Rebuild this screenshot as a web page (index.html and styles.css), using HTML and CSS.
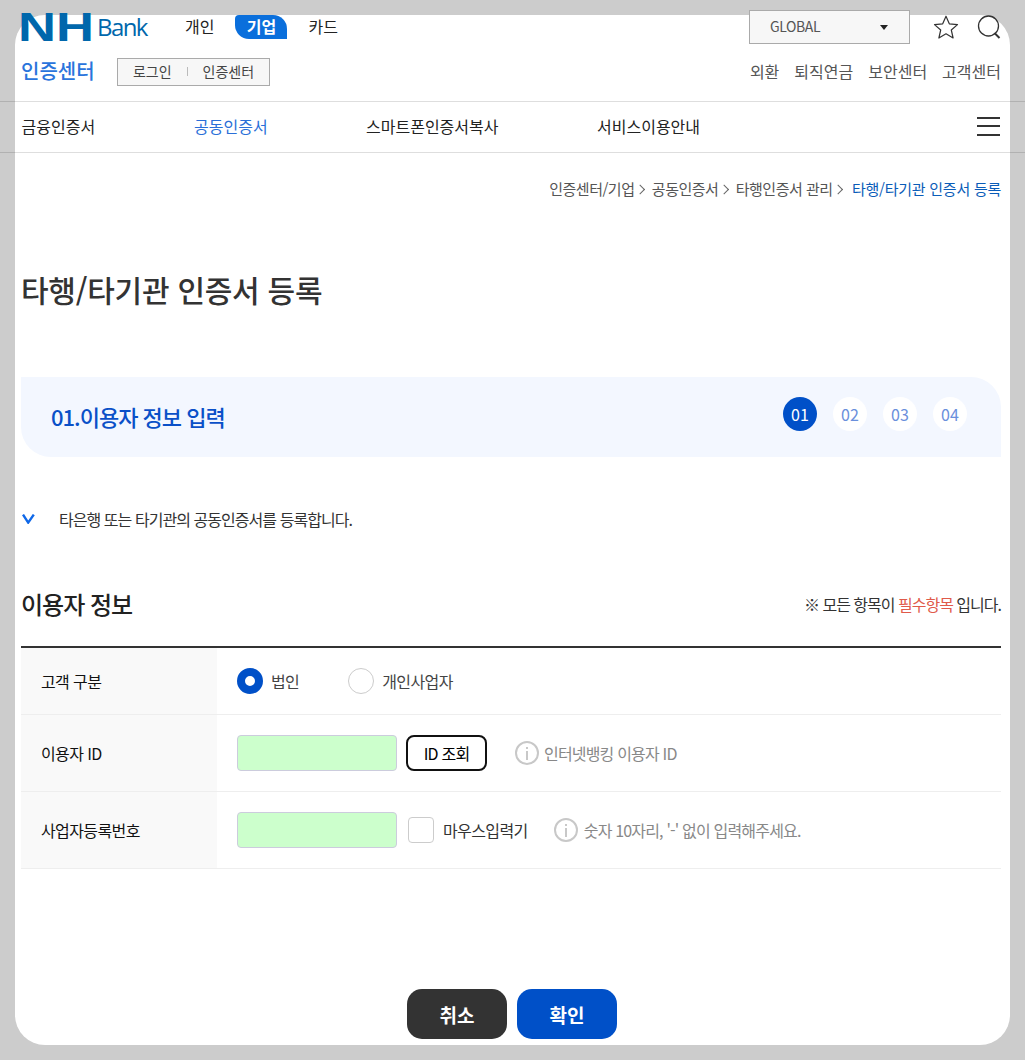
FILE: index.html
```html
<!DOCTYPE html>
<html lang="ko">
<head>
<meta charset="utf-8">
<title>타행/타기관 인증서 등록</title>
<link rel="stylesheet" href="styles.css">
</head>
<body>
<div class="card">
  <header class="top">
    <div class="logo">
      <svg class="logo-nh" width="71" height="30" viewBox="0 0 71 30"><text x="-3" y="29" textLength="76" lengthAdjust="spacingAndGlyphs" class="logo-text">NH</text></svg>
      <span class="logo-bank">Bank</span>
    </div>
    <nav class="tabs">
      <a class="tab">개인</a>
      <a class="tab tab-on">기업</a>
      <a class="tab">카드</a>
    </nav>
    <div class="global">GLOBAL<span class="caret"></span></div>
    <svg class="ico-star" width="26" height="24" viewBox="0 0 26 24"><path d="M13 1.2l3.3 7.6 8.2.8-6.2 5.4 1.8 8-7.1-4.2-7.1 4.2 1.8-8L1.5 9.6l8.2-.8z" fill="none" stroke="#333" stroke-width="1.2" stroke-linejoin="round"/></svg>
    <svg class="ico-search" width="24" height="24" viewBox="0 0 24 24"><circle cx="11.5" cy="11" r="10" fill="none" stroke="#333" stroke-width="1.3"/><path d="M17.5 18l5 5" stroke="#333" stroke-width="2"/></svg>
  </header>
  <div class="sub">
    <strong class="sub-title">인증센터</strong>
    <div class="sub-box"><span>로그인</span><i class="sep"></i><span>인증센터</span></div>
    <div class="sub-links"><a>외환</a><a>퇴직연금</a><a>보안센터</a><a>고객센터</a></div>
  </div>
  <nav class="gnb">
    <a class="gnb-a">금융인증서</a>
    <a class="gnb-b gnb-on">공동인증서</a>
    <a class="gnb-c">스마트폰인증서복사</a>
    <a class="gnb-d">서비스이용안내</a>
    <span class="burger"><i></i><i></i><i></i></span>
  </nav>
  <main class="main">
    <div class="crumb">인증센터/기업 <b class="gt"></b> 공동인증서 <b class="gt"></b> 타행인증서 관리 <b class="gt"></b> <em>타행/타기관 인증서 등록</em></div>
    <h1 class="title">타행/타기관 인증서 등록</h1>
    <section class="step">
      <h2 class="step-title">01.이용자 정보 입력</h2>
      <ol class="dots"><li class="dot dot-on">01</li><li class="dot">02</li><li class="dot">03</li><li class="dot">04</li></ol>
    </section>
    <p class="note"><svg class="check" width="13" height="10" viewBox="0 0 13 10"><path d="M1 .6l5.2 8L11.8.6" fill="none" stroke="#0f68e8" stroke-width="2.4"/></svg>타은행 또는 타기관의 공동인증서를 등록합니다.</p>
    <div class="sec-head">
      <h3 class="sec-title">이용자 정보</h3>
      <span class="req">※ 모든 항목이 <em>필수항목</em> 입니다.</span>
    </div>
    <div class="form">
      <div class="row row-a">
        <div class="th">고객 구분</div>
        <div class="td">
          <span class="radio radio-on"></span><span class="r-label">법인</span>
          <span class="radio"></span><span class="r-label">개인사업자</span>
        </div>
      </div>
      <div class="row">
        <div class="th">이용자 ID</div>
        <div class="td">
          <span class="inp"></span>
          <span class="btn-id">ID 조회</span>
          <svg class="info info-1" width="24" height="24" viewBox="0 0 24 24"><circle cx="12" cy="12" r="11" fill="none" stroke="#c8c8c8" stroke-width="2"/><rect x="11" y="10" width="2" height="9" fill="#c8c8c8"/><rect x="11" y="6" width="2" height="2" fill="#c8c8c8"/></svg>
          <span class="hint">인터넷뱅킹 이용자 ID</span>
        </div>
      </div>
      <div class="row">
        <div class="th">사업자등록번호</div>
        <div class="td">
          <span class="inp"></span>
          <span class="chk"></span>
          <span class="chk-label">마우스입력기</span>
          <svg class="info info-2" width="24" height="24" viewBox="0 0 24 24"><circle cx="12" cy="12" r="11" fill="none" stroke="#c8c8c8" stroke-width="2"/><rect x="11" y="10" width="2" height="9" fill="#c8c8c8"/><rect x="11" y="6" width="2" height="2" fill="#c8c8c8"/></svg>
          <span class="hint">숫자 10자리, '-' 없이 입력해주세요.</span>
        </div>
      </div>
    </div>
    <div class="actions"><button class="act act-cancel">취소</button><button class="act act-ok">확인</button></div>
  </main>
</div>
</body>
</html>
```
FILE: styles.css
```css
* { box-sizing: border-box; }
html, body { margin: 0; height: 1060px; overflow: hidden; }
body { background: #ccc; padding: 15px; font-family: "Noto Sans CJK KR", "Noto Sans", sans-serif; color: #222; }
a { color: inherit; text-decoration: none; }
em { font-style: normal; }
h1, h2, h3, p, ol { margin: 0; padding: 0; }
ol { list-style: none; }

.card { display: flow-root; width: 995px; height: 1030px; background: #fff; border-radius: 30px; padding: 0 9px 0 6px; }

.top { display: flex; align-items: center; height: 34px; margin-top: -5px; }
.logo { display: flex; align-items: center; width: 164px; height: 30px; gap: 5px; }
.logo-nh { display: block; flex: none; overflow: visible; }
.logo-text { font-family: "Liberation Sans", sans-serif; font-weight: 700; font-size: 40px; fill: #0067ac; }
.logo-bank { font-family: "Open Sans", sans-serif; font-size: 24px; line-height: 30px; color: #0067ac; letter-spacing: -1.6px; }
.tabs { display: flex; align-items: center; gap: 21px; font-size: 16px; color: #222; }
.tab { display: block; line-height: 22px; padding-bottom: 2px; }
.tab-on { width: 52px; height: 24px; background: #0a6fdc; color: #fff; font-weight: 700; text-align: center; border-radius: 4px 14px 0 14px; }
.global { width: 161px; height: 34px; margin-left: auto; border: 1px solid #aaa; background: #f7f7f7; font-size: 14px; letter-spacing: -.4px; color: #555; padding: 0 21px 2px 20px; display: flex; justify-content: space-between; align-items: center; }
.caret { width: 0; height: 0; border: 4px solid transparent; border-top: 5px solid #222; border-bottom: 0; margin-top: 2px; }
.ico-star { margin-left: 23px; }
.ico-search { margin-left: 18px; }

.sub { display: flex; align-items: center; height: 28px; margin-top: 14px; }
.sub-title { font-size: 20px; font-weight: 500; color: #2a74dc; width: 96px; padding-bottom: 4px; }
.sub-box { width: 153px; height: 28px; border: 1px solid #aaa; background: #f7f7f7; font-size: 14px; color: #444; display: flex; align-items: center; justify-content: center; gap: 15px; padding-bottom: 2px; }
.sep { width: 1px; height: 9px; background: #bbb; }
.sub-links { margin-left: auto; display: flex; gap: 15px; font-size: 16px; color: #555; padding-bottom: 2px; }

.gnb { display: flex; align-items: center; height: 52px; margin: 15px -24px 0 -21px; padding: 0 25px 2px 21.5px; border-top: 1px solid rgba(0,0,0,.13); border-bottom: 1px solid rgba(0,0,0,.13); font-size: 16px; color: #222; }
.gnb-a { width: 172.5px; }
.gnb-b { width: 172px; }
.gnb-c { width: 231px; }
.gnb-on { color: #2a6fd8; }
.burger { margin-left: auto; display: flex; flex-direction: column; gap: 6.5px; width: 23px; }
.burger i { display: block; height: 2px; background: #333; }

.crumb { text-align: right; font-size: 15px; color: #555; margin-top: 25px; line-height: 22px; height: 22px; letter-spacing: -.5px; }
.crumb em { color: #0a5cb8; margin-left: 2px; letter-spacing: -.25px; }
.gt { display: inline-block; width: 7px; height: 7px; border-top: 1px solid #666; border-right: 1px solid #666; transform: rotate(45deg) translate(-1px, 1px); margin: 0 3px 2px 0; }
.title { font-size: 30px; font-weight: 500; color: #333; line-height: 44px; margin-top: 67px; letter-spacing: -.25px; }

.step { display: flex; align-items: center; justify-content: space-between; height: 80px; margin-top: 66px; background: #f3f7ff; border-radius: 0 30px 0 30px; padding: 0 34px 0 30px; }
.step-title { font-size: 22px; font-weight: 500; color: #0a50c8; letter-spacing: -1px; margin-top: -2px; }
.dots { display: flex; gap: 16px; margin-top: -6px; }
.dot { width: 34px; height: 34px; border-radius: 50%; background: #fff; color: #6a8fdc; font-size: 16px; text-align: center; line-height: 34px; }
.dot-on { background: #0050c8; color: #fff; }

.note { display: flex; align-items: center; font-size: 16px; margin-top: 51px; line-height: 22px; color: #333; letter-spacing: -.95px; }
.check { margin: 0 24px 0 1px; }

.sec-head { display: flex; align-items: center; justify-content: space-between; margin-top: 55px; height: 36px; }
.sec-title { font-size: 24px; font-weight: 500; color: #222; letter-spacing: -1px; }
.req { font-size: 16px; color: #333; letter-spacing: -1px; padding-top: 2px; }
.req em { color: #e05a4a; }

.form { border-top: 2px solid #333; margin-top: 25px; }
.row { display: flex; height: 77px; border-bottom: 1px solid #eee; }
.row-a { height: 67px; }
.th { width: 196px; background: #f9f9f9; padding-left: 20px; display: flex; align-items: center; font-size: 16px; font-weight: 400; color: #111; letter-spacing: -.6px; }
.td { flex: 1; display: flex; align-items: center; padding-left: 20px; font-size: 16px; color: #444; letter-spacing: -.6px; }
.radio { width: 26px; height: 26px; border-radius: 50%; border: 1px solid #ccc; background: #fff; margin-right: 8px; }
.radio-on { border: 8px solid #0050c8; }
.r-label { margin-right: 49px; }
.inp { width: 160px; height: 36px; background: #cfc; border: 1px solid #ccd; border-radius: 4px; }
.btn-id { width: 81px; height: 36px; margin-left: 9px; border: 2px solid #111; border-radius: 8px; font-weight: 400; color: #000; letter-spacing: -.8px; display: flex; align-items: center; justify-content: center; }
.info { flex: none; }
.info-1 { margin: 0 5px 0 28px; }
.info-2 { margin: 0 6px 0 26px; }
.hint { color: #888; letter-spacing: -.82px; }
.chk { width: 26px; height: 26px; margin: 0 9px 0 11px; border: 1px solid #ccc; border-radius: 4px; background: #fff; }
.chk-label { color: #333; }

.actions { display: flex; justify-content: center; gap: 10px; margin-top: 120px; padding-left: 2px; }
.act { width: 100px; height: 50px; border: 0; border-radius: 15px; color: #fff; font: 700 19px "Noto Sans CJK KR", sans-serif; padding: 0; }
.act-cancel { background: #333; }
.act-ok { background: #0050c8; }
```
